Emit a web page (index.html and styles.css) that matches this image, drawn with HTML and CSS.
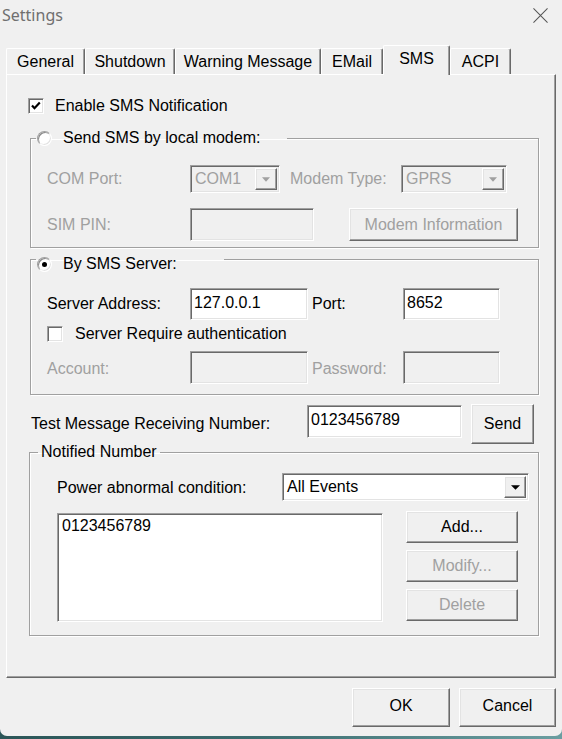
FILE: index.html
```html
<!DOCTYPE html>
<html lang="en">
<head>
<meta charset="utf-8">
<title>Settings</title>
<link rel="stylesheet" href="styles.css">
</head>
<body>
<div class="window">
  <div class="titlebar">
    <span class="title">Settings</span>
    <svg class="close" viewBox="0 0 16 16"><path d="M0.5 0.5 L15.5 15.5 M15.5 0.5 L0.5 15.5" stroke="#555" stroke-width="1.1" fill="none"/></svg>
  </div>
  <div class="tabs">
    <div class="tab tab-general">General</div>
    <div class="tab tab-shutdown">Shutdown</div>
    <div class="tab tab-warning">Warning Message</div>
    <div class="tab tab-email">EMail</div>
    <div class="tab tab-sms sel">SMS</div>
    <div class="tab tab-acpi">ACPI</div>
  </div>
  <div class="panel">
    <div class="check-row enable-row">
      <span class="checkbox"><svg viewBox="0 0 14 14"><path d="M3 6.5 L5.5 9.2 L10.8 3.5" stroke="#000" stroke-width="2.2" fill="none"/></svg></span>
      <span class="check-label">Enable SMS Notification</span>
    </div>

    <fieldset class="group group-modem">
      <legend class="legend legend-modem"><span class="legend-inner"><span class="radio"></span><span class="legend-text">Send SMS by local modem:</span></span></legend>
      <div class="gbody gbody-modem">
        <div class="row row-com">
          <span class="lbl dis col1">COM Port:</span>
          <div class="combo dis w-com"><span class="val">COM1</span><span class="dd"><svg class="tri" viewBox="0 0 7 4"><path d="M0 0H7L3.5 4Z"/></svg></span></div>
          <span class="lbl dis w-mtype">Modem Type:</span>
          <div class="combo dis w-gprs"><span class="val">GPRS</span><span class="dd"><svg class="tri" viewBox="0 0 7 4"><path d="M0 0H7L3.5 4Z"/></svg></span></div>
        </div>
        <div class="row row-sim">
          <span class="lbl dis col1">SIM PIN:</span>
          <div class="input dis w-sim"></div>
          <div class="btn dis btn-info">Modem Information</div>
        </div>
      </div>
    </fieldset>

    <fieldset class="group group-server">
      <legend class="legend legend-server"><span class="legend-inner"><span class="radio on"></span><span class="legend-text">By SMS Server:</span></span></legend>
      <div class="gbody gbody-server">
        <div class="row row-addr">
          <span class="lbl col1">Server Address:</span>
          <div class="input w-addr"><span class="val">127.0.0.1</span></div>
          <span class="lbl w-port">Port:</span>
          <div class="input w-portin"><span class="val">8652</span></div>
        </div>
        <div class="check-row auth-row">
          <span class="checkbox"></span>
          <span class="check-label">Server Require authentication</span>
        </div>
        <div class="row row-acct">
          <span class="lbl dis col1">Account:</span>
          <div class="input dis w-addr"></div>
          <span class="lbl dis w-port">Password:</span>
          <div class="input dis w-portin"></div>
        </div>
      </div>
    </fieldset>

    <div class="row test-row">
      <span class="lbl test-lbl">Test Message Receiving Number:</span>
      <div class="input w-test"><span class="val">0123456789</span></div>
      <div class="btn btn-send">Send</div>
    </div>

    <fieldset class="group group-notified">
      <legend class="legend legend-notified"><span class="legend-inner"><span class="legend-text">Notified Number</span></span></legend>
      <div class="gbody gbody-notified">
        <div class="row row-power">
          <span class="lbl w-power">Power abnormal condition:</span>
          <div class="combo w-events"><span class="val">All Events</span><span class="dd"><svg class="tri tri-on" viewBox="0 0 8 4"><path d="M0 0H8L4 4Z"/></svg></span></div>
        </div>
        <div class="row row-list">
          <div class="listbox"><div class="list-item">0123456789</div></div>
          <div class="list-buttons">
            <div class="btn btn-side">Add...</div>
            <div class="btn btn-side dis">Modify...</div>
            <div class="btn btn-side dis">Delete</div>
          </div>
        </div>
      </div>
    </fieldset>
  </div>
  <div class="footer">
    <div class="btn btn-ok">OK</div>
    <div class="btn btn-cancel">Cancel</div>
  </div>
</div>
</body>
</html>
```
FILE: styles.css
```css
* { box-sizing: border-box; }
html, body { margin: 0; padding: 0; }
body {
  width: 562px;
  height: 739px;
  overflow: hidden;
  background: linear-gradient(90deg, #2b5557 0%, #3b6c6f 45%, #6b9ea1 100%);
  font-family: "Liberation Sans", Arial, sans-serif;
  font-size: 16px;
  line-height: 18px;
  color: #000;
}
.window {
  width: 562px;
  height: 736px;
  background: #f0f0f0;
  border-radius: 0 0 7px 7px;
  overflow: hidden;
}
.titlebar {
  height: 29px;
  display: flex;
  align-items: center;
  justify-content: space-between;
  padding: 0 14px 0 2px;
}
.title {
  font-family: "Noto Sans", "Open Sans", sans-serif;
  font-size: 16px;
  color: #6f6f6f;
}
.close { width: 15px; height: 15px; margin-top: 2px; }

/* tabs */
.tabs {
  display: flex;
  align-items: flex-end;
  height: 30px;
  margin-top: 16px;
  padding-left: 6px;
}
.tab {
  height: 26px;
  margin-bottom: 1px;
  display: flex;
  align-items: center;
  justify-content: center;
  background: #f0f0f0;
  border-top: 1px solid #fff;
  border-left: 1px solid #fff;
  border-right: 1px solid #696969;
  box-shadow: inset -1px 0 0 #a0a0a0;
  border-radius: 2px 2px 0 0;
  padding-top: 1px;
}
.tab.sel {
  height: 30px;
  margin-bottom: 0;
  position: relative;
  z-index: 2;
  padding-bottom: 4px;
}
.tab-general { width: 79px; }
.tab-shutdown { width: 90px; }
.tab-warning { width: 146px; }
.tab-email { width: 62px; }
.tab-sms { width: 67px; }
.tab-acpi { width: 61px; }

/* panel */
.panel {
  position: relative;
  z-index: 1;
  margin: -1px 0 0 6px;
  width: 550px;
  height: 604px;
  border-top: 1px solid #fff;
  border-left: 1px solid #fff;
  border-right: 1px solid #696969;
  border-bottom: 1px solid #696969;
  box-shadow: inset -1px -1px 0 #a0a0a0;
  padding: 22px 16px 0 23px;
}

/* checkbox */
.check-row { display: flex; align-items: center; height: 18px; }
.enable-row { margin-left: -2px; }
.enable-row .check-label { margin-left: 11px; }
.auth-row { margin-top: 5px; }
.auth-row .check-label { margin-left: 12px; }
.checkbox {
  width: 16px;
  height: 16px;
  flex: none;
  background: #fff;
  border: 1px solid;
  border-color: #a0a0a0 #fff #fff #a0a0a0;
  box-shadow: inset 1px 1px 0 #696969, inset -1px -1px 0 #e3e3e3;
  display: flex;
  align-items: center;
  justify-content: center;
}
.checkbox svg { width: 14px; height: 14px; }

/* group boxes */
.group {
  margin: 0;
  padding: 0;
  min-width: 0;
  border: 1px solid #a0a0a0;
  box-shadow: 1px 1px 0 #fff, inset 1px 1px 0 #fff;
}
.group-modem { margin-top: 14px; }
.group-server { margin-top: -3px; }
.legend { padding: 0; }
.legend-inner { display: flex; align-items: center; height: 18px; }
.legend-modem { margin-left: 5px; width: 251px; }
.legend-server { margin-left: 5px; width: 188px; }
.legend-modem .legend-inner { padding-left: 1px; }
.legend-server .legend-inner { padding: 10px 0 0 1px; height: 28px; }
.legend-text { margin-left: 11px; }
.legend-notified { margin-left: 8px; width: 122px; }
.legend-notified .legend-inner { height: 16px; padding-left: 3px; }
.legend-notified .legend-text { margin-left: 0; }

.radio {
  width: 15px;
  height: 15px;
  flex: none;
  border-radius: 50%;
  background: #fff;
  border: 1px solid;
  border-color: #a0a0a0 #fff #fff #a0a0a0;
  box-shadow: inset 1px 1px 0 #8a8a8a, inset -1px -1px 0 #e3e3e3;
  position: relative;
}
.radio.on::after {
  content: "";
  position: absolute;
  left: 4px;
  top: 4px;
  width: 5px;
  height: 5px;
  border-radius: 50%;
  background: #000;
}

.gbody-modem { padding: 18px 0 6px 16px; }
.gbody-server { padding: 15px 0 10px 16px; }
.gbody-notified { padding: 13px 0 13px 27px; }

.row { display: flex; align-items: center; }
.row-com { height: 28px; }
.row-sim { height: 33px; margin-top: 15px; }
.row-addr { height: 32px; }
.row-acct { height: 33px; margin-top: 8px; }
.row-acct .lbl { padding-top: 3px; }

.lbl { flex: none; white-space: nowrap; }
.dis { color: #a0a0a0; }
.col1 { width: 143px; }
.w-mtype { width: 111px; margin-left: 10px; }
.w-port { width: 91px; margin-left: 4px; }

/* inputs */
.input, .combo, .listbox {
  flex: none;
  background: #fff;
  border: 1px solid;
  border-color: #a0a0a0 #fff #fff #a0a0a0;
  box-shadow: inset 1px 1px 0 #696969, inset -1px -1px 0 #e3e3e3;
}
.input { height: 100%; display: flex; align-items: center; padding: 0 0 3px 3px; }
.input.dis, .combo.dis { background: #f0f0f0; }
.w-sim { width: 124px; }
.w-addr { width: 118px; }
.w-portin { width: 97px; }
.w-test { width: 155px; height: 33px; margin-top: 1px; }

.combo {
  height: 28px;
  display: flex;
  align-items: center;
  justify-content: space-between;
  padding: 2px;
}
.combo .val { padding-left: 2px; }
.w-com { width: 90px; }
.w-gprs { width: 106px; }
.w-events { width: 247px; }
.dd {
  width: 22px;
  height: 22px;
  display: flex;
  align-items: center;
  justify-content: center;
  background: #f0f0f0;
  border: 1px solid;
  border-color: #fff #696969 #696969 #fff;
  box-shadow: inset -1px -1px 0 #a0a0a0, inset 1px 1px 0 #e3e3e3;
}
.tri { width: 8px; height: 5px; fill: #a0a0a0; }
.tri-on { width: 9px; height: 5px; fill: #000; }

/* buttons */
.btn {
  flex: none;
  display: flex;
  align-items: center;
  justify-content: center;
  background: #f0f0f0;
  border: 1px solid;
  border-color: #fff #696969 #696969 #fff;
  box-shadow: inset -1px -1px 0 #a0a0a0, inset 1px 1px 0 #e3e3e3;
  white-space: nowrap;
}
.btn-info { width: 169px; height: 33px; margin-left: 35px; }

.test-row { align-items: flex-start; height: 40px; margin: 9px 0 0 1px; }
.test-lbl { width: 276px; height: 40px; display: flex; align-items: center; }
.btn-send { width: 63px; height: 40px; margin-left: 9px; }

.group-notified { margin-left: -1px; }
.row-power { height: 28px; }
.w-power { width: 225px; padding-top: 2px; }
.row-list { align-items: flex-start; margin-top: 12px; }
.listbox { width: 326px; height: 109px; padding: 3px 0 0 4px; }
.list-buttons {
  display: flex;
  flex-direction: column;
  gap: 7px;
  margin: -2px 0 0 23px;
}
.btn-side { width: 112px; height: 32px; }

.footer {
  display: flex;
  justify-content: flex-end;
  gap: 9px;
  margin-top: 10px;
  padding-right: 6px;
}
.btn-ok { width: 98px; height: 39px; padding-bottom: 4px; }
.btn-cancel { width: 97px; height: 39px; padding-bottom: 4px; }
```
